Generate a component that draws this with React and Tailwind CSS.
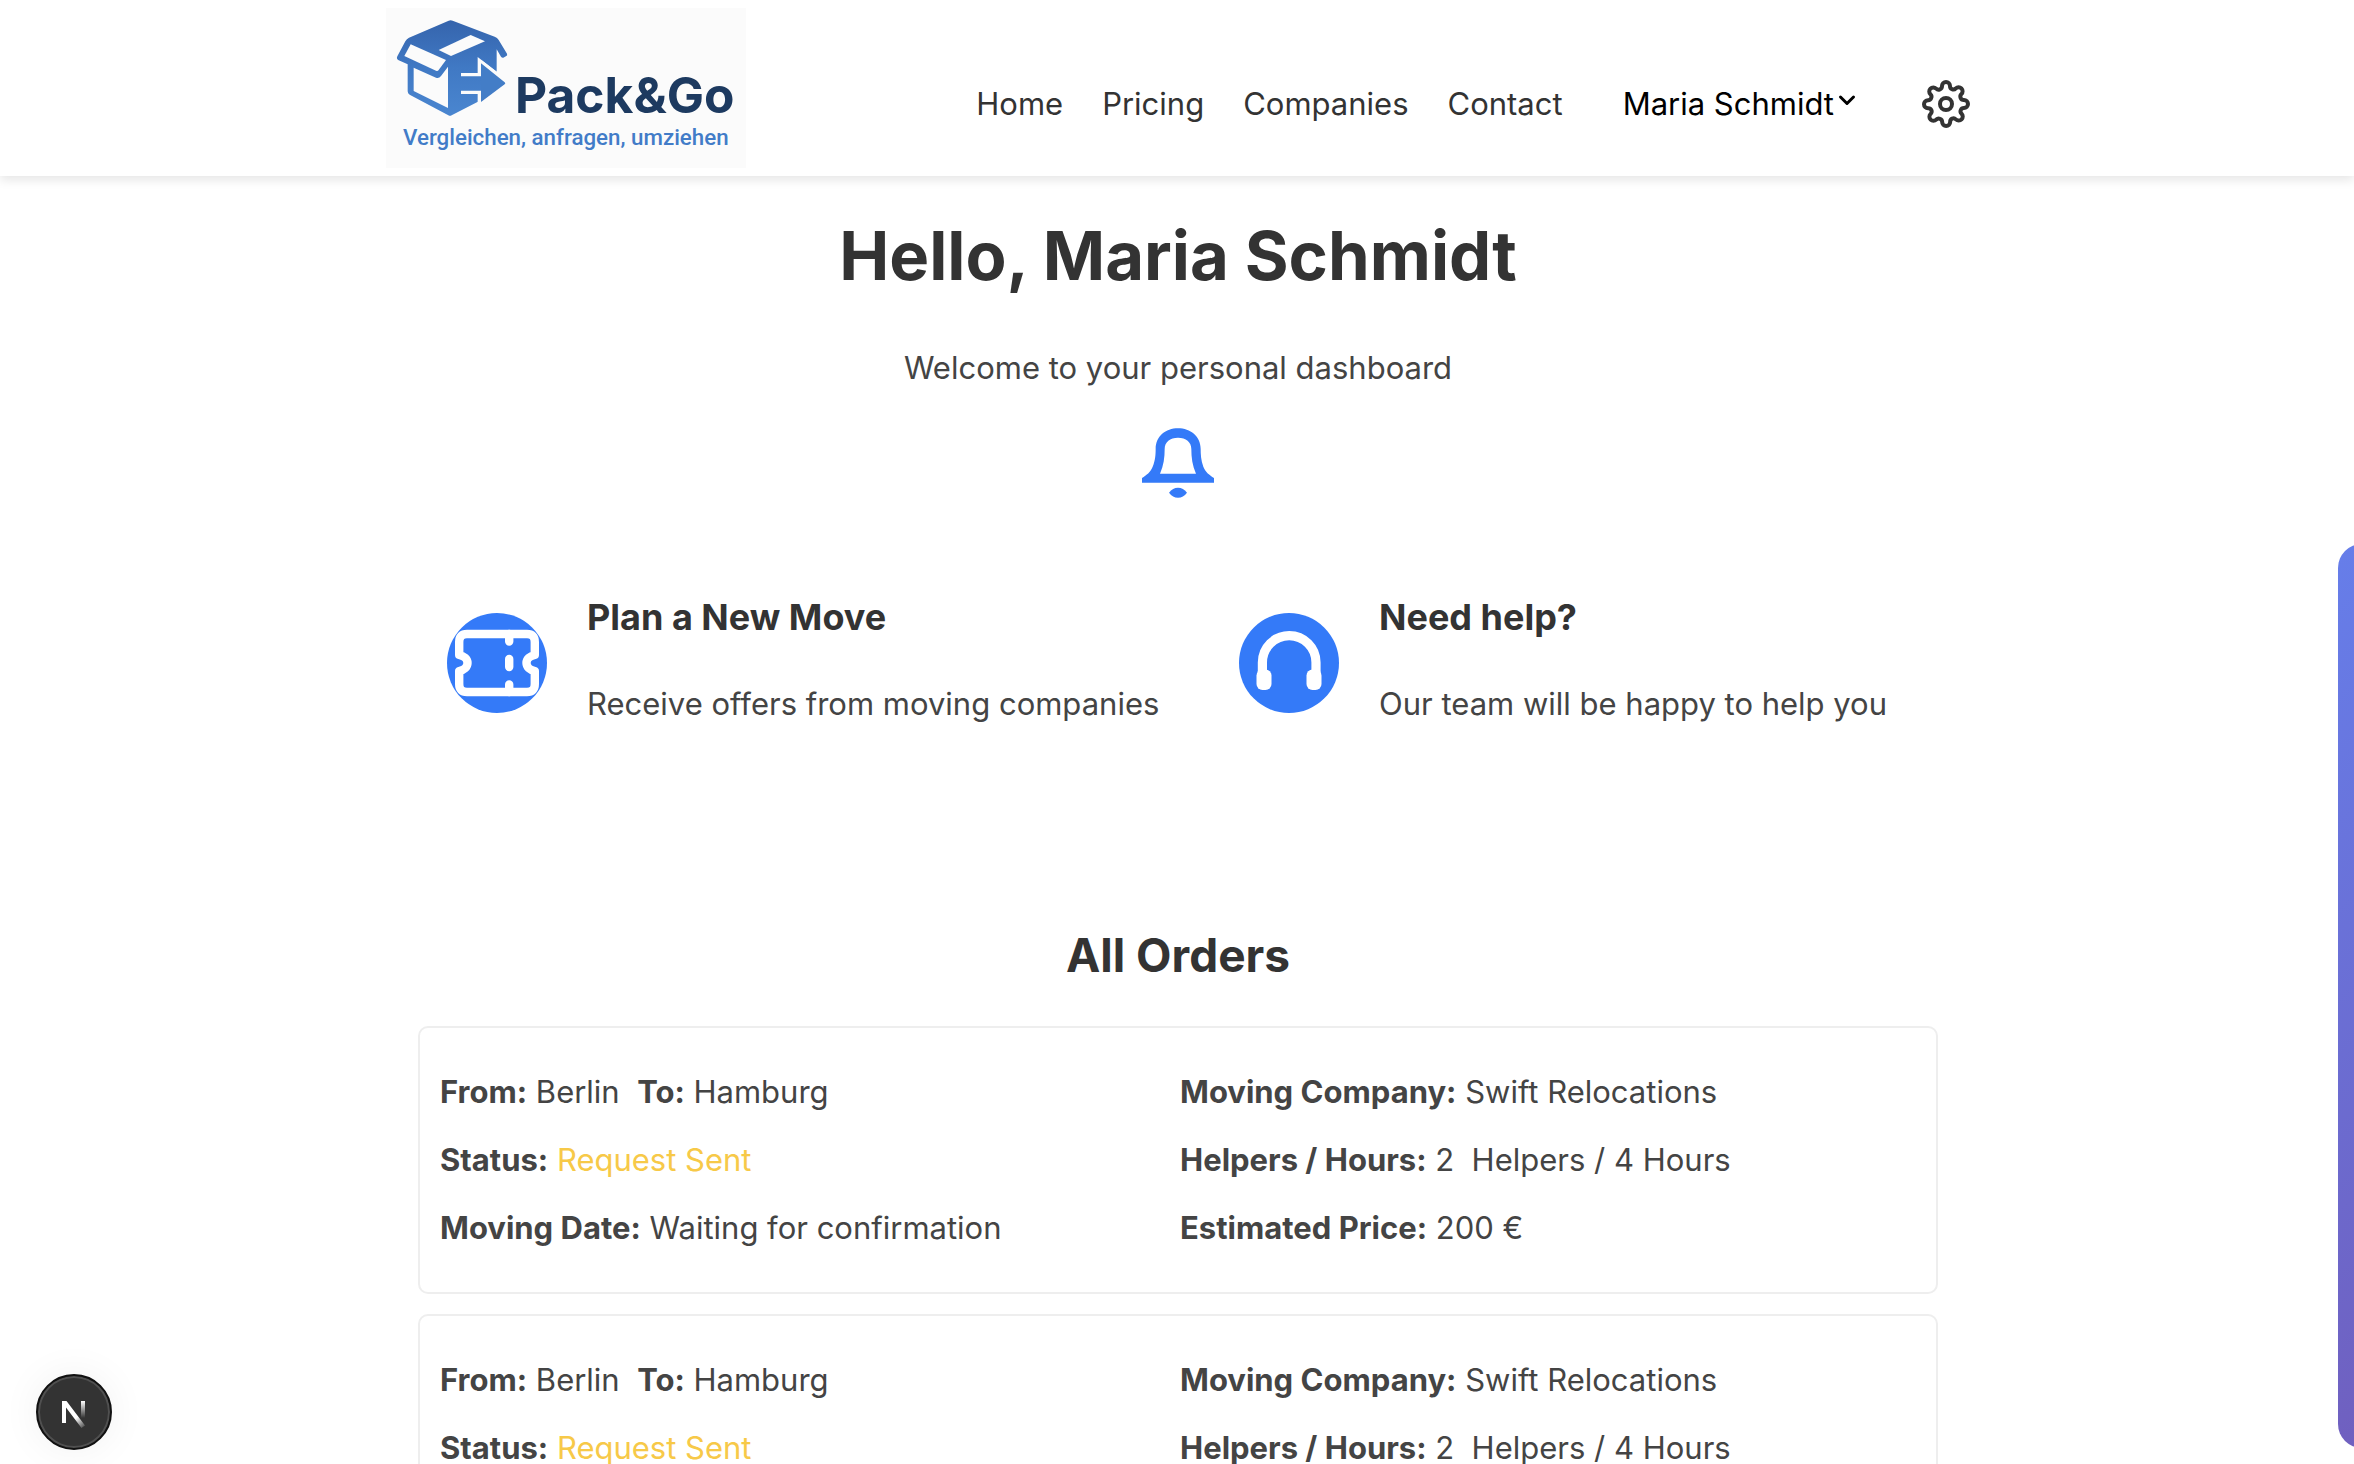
import React from "react";
import { FiSettings } from "react-icons/fi";

const NAV_LINKS = ["Home", "Pricing", "Companies", "Contact"];

const ORDERS = [
  { id: 1, from: "Berlin", to: "Hamburg", status: "Request Sent", date: "Waiting for confirmation", company: "Swift Relocations", helpers: 2, hours: 4, price: 200 },
  { id: 2, from: "Berlin", to: "Hamburg", status: "Request Sent", date: "Waiting for confirmation", company: "Swift Relocations", helpers: 2, hours: 4, price: 200 },
];

function Logo() {
  return (
    <svg viewBox="48 24 1080 480" className="h-40 w-[360px] bg-[#fbfbfb]" role="img" aria-label="Pack&Go">
      <defs>
        <linearGradient id="boxFill" x1="0" y1="0" x2="0" y2="1">
          <stop offset="0" stopColor="#3564ac" />
          <stop offset="0.5" stopColor="#4079c4" />
          <stop offset="1" stopColor="#4a86d0" />
        </linearGradient>
      </defs>
      <path
        fill="url(#boxFill)"
        d="M236 62Q242 59 248 62L374 110Q382 113 386 120L411 161Q413 166 409 168L400 173Q396 174 393 170L380 148V215L334 180V300L245 346Q240 349 235 346L119 284Q113 281 113 274V193L86 181Q78 177 82 169L106 124Q110 116 117 113Z"
      />
      <path fill="#fbfbfb" d="M122 133L228 180L206 210Q203 214 198 212L103 168Z" />
      <path fill="#fbfbfb" d="M302 105L345 124L243 168L206 150Z" />
      <path fill="#fbfbfb" d="M131 203L198 233Q207 236 213 228L234 200V324L131 273Z" />
      <path fill="none" stroke="#fbfbfb" strokeWidth="10" d="M273 224H328V181L386 226M273 277H328V312" />
      <path fill="#437dc7" d="M333 190L404 247Q408 250 404 253L333 306Z" />
      <text x="435" y="339" fontSize="149" fontWeight="700" fill="#1d3a60" fontFamily="Inter, sans-serif">Pack&amp;Go</text>
      <text x="99" y="434" fontSize="67" fontWeight="500" fill="#427cc8" fontFamily="Roboto, sans-serif">Vergleichen, anfragen, umziehen</text>
    </svg>
  );
}

function BellIcon() {
  return (
    <svg viewBox="66 42 216 210" className="h-[70px] w-[72px]" fill="#347af8" aria-hidden="true">
      <path
        fillRule="evenodd"
        d="M66 206V192C80 182 91 176 98 158C106 140 107 120 107 105C107 67 137 43 174 43C211 43 242 67 242 105C242 120 243 140 250 158C257 176 268 182 282 192V206ZM120 179C131 155 134 130 134 105C134 84 150 71 174 71C198 71 214 84 214 105C214 130 217 155 228 179Z"
      />
      <path d="M147 236C155 226 163 221 174 221C185 221 193 226 201 236C193 246 185 251 174 251C163 251 155 246 147 236Z" />
    </svg>
  );
}

function TicketIcon() {
  return (
    <svg viewBox="0 0 100 100" className="size-[100px] shrink-0" aria-hidden="true">
      <circle cx="50" cy="50" r="50" fill="#347af8" />
      <g fill="none" stroke="#fff" strokeWidth="8.4" strokeLinecap="round" strokeLinejoin="round">
        <path d="M12.2 29Q12.2 21 20 21H80Q87.8 21 87.8 29V42C83 43 79.5 46 79.5 50C79.5 54 83 57 87.8 58V71Q87.8 79 80 79H20Q12.2 79 12.2 71V58C17 57 20.5 54 20.5 50C20.5 46 17 43 12.2 42Z" />
        <path d="M62.2 21V28.5M62.2 46V54M62.2 71.5V79" />
      </g>
    </svg>
  );
}

function HeadphonesIcon() {
  return (
    <svg viewBox="0 0 100 100" className="size-[100px] shrink-0" aria-hidden="true">
      <circle cx="50" cy="50" r="50" fill="#347af8" />
      <path fill="none" stroke="#fff" strokeWidth="9.2" d="M23.4 62V49.5A26.8 26.8 0 0 1 77 49.5V62" />
      <rect x="17.5" y="56.5" width="15" height="20.5" rx="6" fill="#fff" />
      <rect x="67.5" y="56.5" width="15" height="20.5" rx="6" fill="#fff" />
    </svg>
  );
}

function ActionCard({ icon, title, text }) {
  return (
    <a href="#" className="flex items-start gap-10 pl-[61px]">
      <span className="pt-5">{icon}</span>
      <span className="flex flex-col gap-[43px]">
        <h3 className="text-[36px] leading-[48px] font-bold text-[#333]">{title}</h3>
        <p>{text}</p>
      </span>
    </a>
  );
}

function Field({ label, children }) {
  return (
    <p className="whitespace-pre-wrap">
      <strong className="font-bold">{label}</strong> {children}
    </p>
  );
}

function OrderCard({ order }) {
  return (
    <article className="grid grid-cols-2 gap-x-1 rounded-[10px] border-2 border-[#eee] px-5 py-11">
      <div className="flex flex-col gap-7">
        <p className="whitespace-pre-wrap">
          <strong>From:</strong> {order.from}{"  "}
          <strong>To:</strong> {order.to}
        </p>
        <Field label="Status:">
          <span className="text-[#f7c948]">{order.status}</span>
        </Field>
        <Field label="Moving Date:">{order.date}</Field>
      </div>
      <div className="flex flex-col gap-7">
        <Field label="Moving Company:">{order.company}</Field>
        <Field label="Helpers / Hours:">{`${order.helpers}  Helpers / ${order.hours} Hours`}</Field>
        <Field label="Estimated Price:">{`${order.price} €`}</Field>
      </div>
    </article>
  );
}

function DevBadge() {
  return (
    <button
      type="button"
      aria-label="Open Next.js Dev Tools"
      className="fixed bottom-[14px] left-9 size-[76px] rounded-full border-2 border-[#111] bg-[#333] shadow-[inset_0_0_0_2px_#505050,0_0_40px_rgba(0,0,0,0.06)]"
    >
      <svg viewBox="0 0 72 72" className="size-[72px]" fill="none" aria-hidden="true">
        <defs>
          <linearGradient id="diag" gradientUnits="userSpaceOnUse" x1="38" y1="42" x2="47" y2="53">
            <stop stopColor="#fff" />
            <stop offset="1" stopColor="#fff" stopOpacity="0" />
          </linearGradient>
          <linearGradient id="stem" gradientUnits="userSpaceOnUse" x1="45" y1="25" x2="45" y2="42">
            <stop stopColor="#fff" />
            <stop offset="1" stopColor="#fff" stopOpacity="0" />
          </linearGradient>
        </defs>
        <path d="M24 25H28.500L47 49.500L43.500 52L28 31.500V47H24Z" fill="url(#diag)" />
        <path d="M43 25H47V42H43Z" fill="url(#stem)" />
      </svg>
    </button>
  );
}

export default function App() {
  return (
    <div className="h-screen overflow-x-hidden overflow-y-auto bg-white font-['Inter',sans-serif] text-[31px] leading-10 text-[#444] [scrollbar-width:none]">
      <header className="bg-white pl-0.5 shadow-[0_4px_10px_rgba(0,0,0,0.1)]">
        <div className="mx-auto flex max-w-[1584px] items-center justify-between py-2">
          <a href="#"><Logo /></a>
          <nav className="flex items-center pt-8 text-[#333]">
            <ul className="flex gap-[39px]">
              {NAV_LINKS.map((link) => (
                <li key={link}><a href="#">{link}</a></li>
              ))}
            </ul>
            <button type="button" className="ml-15 flex items-center gap-1 text-black">
              Maria Schmidt
              <svg viewBox="0 0 18 20" className="mb-2 h-5 w-[18px]" fill="none" stroke="currentColor" strokeWidth="3" strokeLinecap="round" strokeLinejoin="round" aria-hidden="true">
                <path d="M2.500 7L9 13.500L15.500 7" />
              </svg>
            </button>
            <button type="button" aria-label="Settings" className="ml-[66px]">
              <FiSettings className="size-12" />
            </button>
          </nav>
        </div>
      </header>

      <div className="pl-0.5">
        <main className="mx-auto max-w-[1584px] pt-10">
          <section className="flex flex-col items-center">
            <h1 className="text-[67px] leading-[80px] font-bold text-[#333]">Hello, Maria Schmidt</h1>
            <p className="mt-[52px]">Welcome to your personal dashboard</p>
            <button type="button" aria-label="Notifications" className="mt-10">
              <BellIcon />
            </button>
          </section>

          <section className="mt-[95px] grid grid-cols-2">
            <ActionCard icon={<TicketIcon />} title="Plan a New Move" text="Receive offers from moving companies" />
            <ActionCard icon={<HeadphonesIcon />} title="Need help?" text="Our team will be happy to help you" />
          </section>

          <section className="mt-[203px] px-8 pb-5">
            <h2 className="text-center text-[46px] leading-[56px] font-bold text-[#333]">All Orders</h2>
            <div className="mt-[43px] flex flex-col gap-5">
              {ORDERS.map((order) => (
                <OrderCard key={order.id} order={order} />
              ))}
            </div>
          </section>
        </main>
      </div>

      <aside
        aria-label="Side panel"
        className="fixed -right-[624px] bottom-4 h-[904px] w-[640px] rounded-l-3xl bg-[linear-gradient(135deg,#667eea_0%,#764ba2_100%)]"
      />
      <DevBadge />
    </div>
  );
}
